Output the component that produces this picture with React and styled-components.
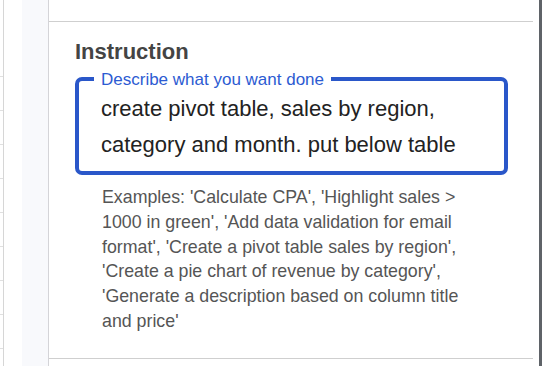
import React from "react";
import styled, { createGlobalStyle } from "styled-components";

const GlobalStyle = createGlobalStyle`
  html, body { margin: 0; padding: 0; background: #ffffff; overflow: hidden; }
  * { box-sizing: border-box; }
  body { font-family: "Liberation Sans", Arial, sans-serif; }
`;

const Frame = styled.div`
  display: flex;
  width: 542px;
  height: 366px;
  background: #ffffff;
`;

const SheetColumn = styled.div`
  width: 4px;
  flex: none;
  padding-top: 76px;
  border-right: 1px solid #d6d6d6;
  display: flex;
  flex-direction: column;
`;

const SheetGrid = styled.div`
  flex: 1;
  background-image: repeating-linear-gradient(
    to bottom,
    #e0e0e0 0px,
    #e0e0e0 1px,
    transparent 1px,
    transparent 34px
  );
`;

const Gutter = styled.div`
  width: 18px;
  flex: none;
`;

const Rail = styled.div`
  width: 27px;
  flex: none;
  background: #f8f9fc;
  border-right: 1px solid #d4d4d8;
`;

const Main = styled.div`
  flex: 1;
  display: flex;
  align-items: flex-start;
  min-width: 0;
`;

const Section = styled.section`
  width: 484px;
  margin-top: 21px;
  margin-right: 6px;
  border-top: 1px solid #cfcfcf;
  border-bottom: 1px solid #cfcfcf;
  padding: 17px 0 24px 26px;
  display: flex;
  flex-direction: column;
`;

const Scrollbar = styled.div`
  width: 3px;
  height: 366px;
  flex: none;
  background: #5f6368;
`;

const Heading = styled.h2`
  margin: 0;
  font-size: 22px;
  line-height: 26px;
  font-weight: 700;
  color: #444444;
`;

const Field = styled.fieldset`
  margin: 3px 0 0 0;
  width: 433px;
  border: 4px solid #2a57c9;
  border-radius: 7px;
  padding: 1px 8px 8px 22px;
  min-inline-size: 0;
`;

const Legend = styled.legend`
  margin-left: -7px;
  padding: 2px 7px 0;
  font-size: 17px;
  line-height: 20px;
  color: #2c5bd2;
`;

const Input = styled.textarea`
  display: block;
  width: 100%;
  height: 72px;
  margin: 0;
  padding: 0;
  border: none;
  outline: none;
  resize: none;
  overflow: hidden;
  background: transparent;
  font-family: "Liberation Sans", Arial, sans-serif;
  font-size: 22px;
  line-height: 36px;
  color: #222222;
`;

const Helper = styled.p`
  margin: 10px 0 0 27px;
  width: 378px;
  font-size: 17.8px;
  line-height: 24.8px;
  color: #555555;
`;

export default function App() {
  return (
    <>
      <GlobalStyle />
      <Frame>
        <SheetColumn>
          <SheetGrid />
        </SheetColumn>
        <Gutter />
        <Rail />
        <Main>
          <Section>
            <Heading>Instruction</Heading>
            <Field>
              <Legend>Describe what you want done</Legend>
              <Input
                defaultValue="create pivot table, sales by region, category and month. put below table"
                spellCheck={false}
              />
            </Field>
            <Helper>
              Examples: 'Calculate CPA', 'Highlight sales &gt; 1000 in green', 'Add data validation for email format', 'Create a pivot table sales by region', 'Create a pie chart of revenue by category', 'Generate a description based on column title and price'
            </Helper>
          </Section>
          <Scrollbar />
        </Main>
      </Frame>
    </>
  );
}
